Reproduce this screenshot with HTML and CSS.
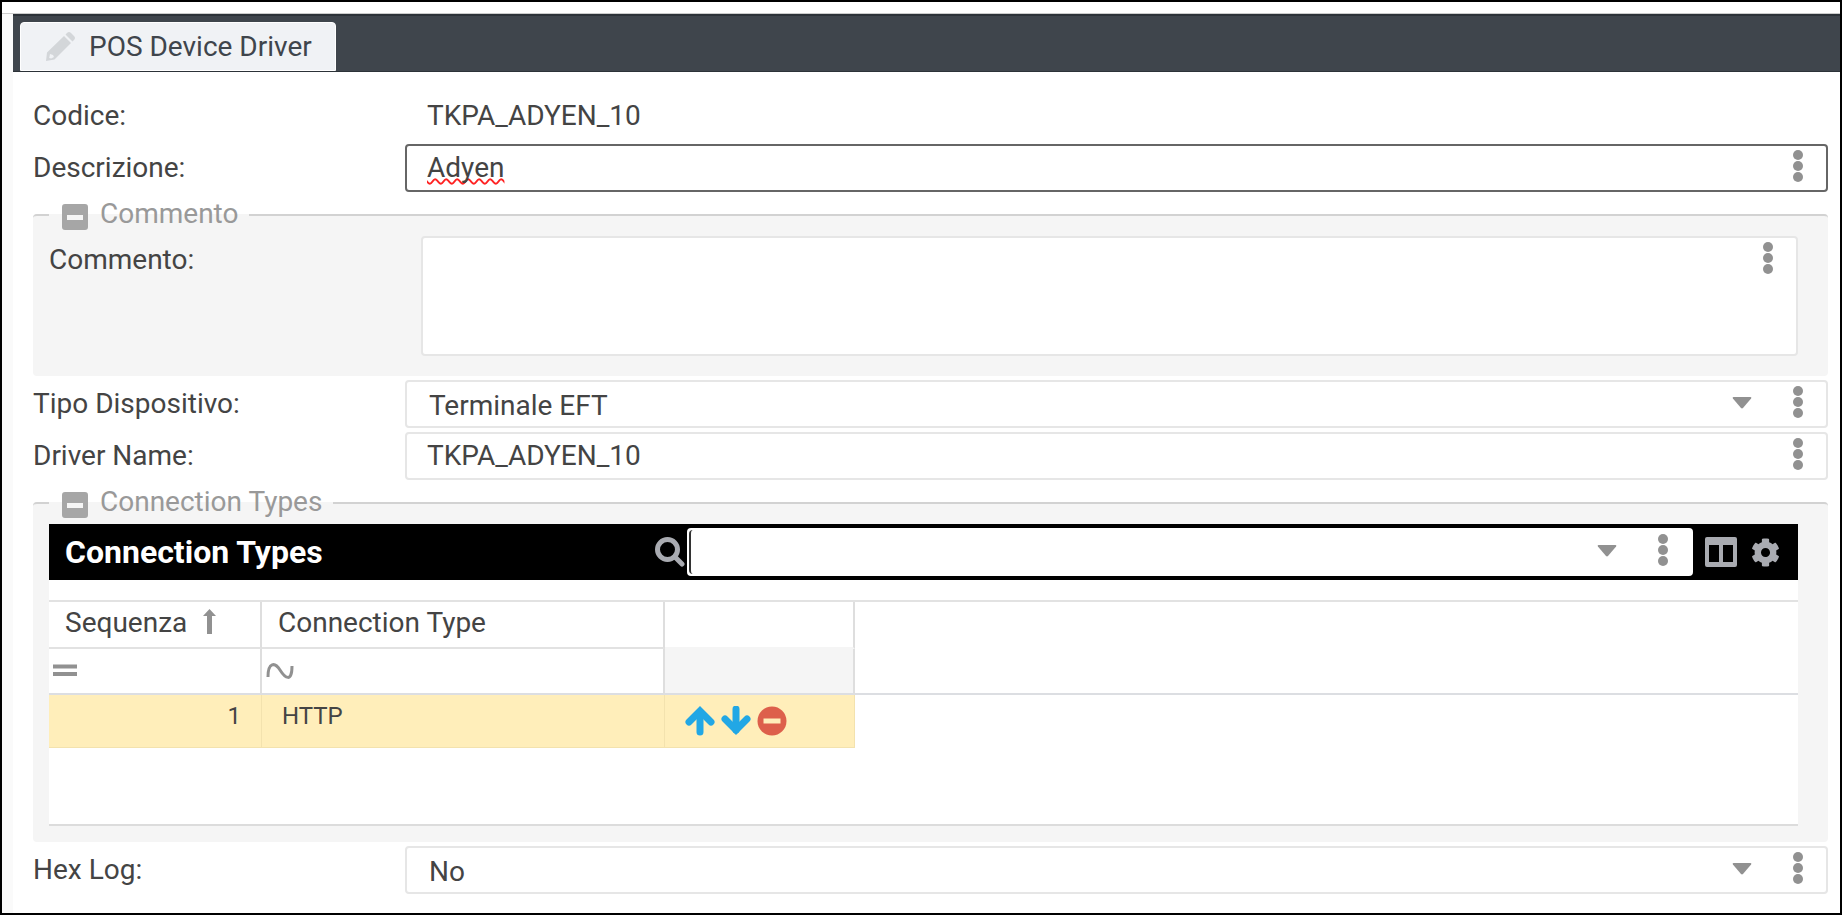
FILE: index.html
```html
<!DOCTYPE html>
<html lang="it">
<head>
    <meta charset="UTF-8">
    <meta name="viewport" content="width=device-width, initial-scale=1.0">
    <title>POS Device Driver</title>
    <link rel="stylesheet" href="styles.css">
</head>
<body>
    <!-- Shared icons -->
    <svg class="sprite" aria-hidden="true">
        <symbol id="dots" viewBox="0 0 10 34">
            <circle cx="5" cy="6" r="5"/><circle cx="5" cy="17" r="5"/><circle cx="5" cy="28" r="5"/>
        </symbol>
        <symbol id="caret" viewBox="0 0 20 12">
            <path d="M1.5 0h17q1.500 .3.6 1.500L11 11q-1 .8-2 0L.9 1.500Q0 .3 1.500 0z"/>
        </symbol>
        <symbol id="minus" viewBox="0 0 26 26">
            <path fill-rule="evenodd" d="M3 0h20a3 3 0 0 1 3 3v20a3 3 0 0 1-3 3H3a3 3 0 0 1-3-3V3a3 3 0 0 1 3-3zM5 11v5h16v-5z"/>
        </symbol>
    </svg>

    <div class="window">
        <div class="topline"></div>
        <main class="panel">
            <nav class="tabs">
                <button class="tab" type="button">
                    <svg class="icon-pencil" viewBox="0 0 29 29"><path fill-rule="evenodd" d="M18 4l7 7L8.500 27.500 0 29l1-8.500zM19.500 2.500L21 1q2-2 4 0l3 3q2 2 0 4l-1.500 1.500zM4 22l-.8 4 2 .6 2.800-1.600-1-2z"/></svg>
                    POS Device Driver
                </button>
            </nav>

            <form class="form">
                <div class="row">
                    <span class="label">Codice:</span>
                    <span class="value">TKPA_ADYEN_10</span>
                </div>
                <div class="row">
                    <label class="label" for="descrizione">Descrizione:</label>
                    <div class="field active">
                        <input class="misspelled" id="descrizione" type="text" value="Adyen">
                        <button class="more" type="button" aria-label="Menu"><svg class="dots"><use href="#dots"/></svg></button>
                    </div>
                </div>

                <fieldset class="group">
                    <legend>
                        <button class="toggle" type="button" aria-label="Comprimi"><svg class="icon-minus"><use href="#minus"/></svg></button>
                        <span>Commento</span>
                    </legend>
                    <div class="row">
                        <label class="label" for="commento">Commento:</label>
                        <div class="field area">
                            <textarea id="commento"></textarea>
                            <button class="more" type="button" aria-label="Menu"><svg class="dots"><use href="#dots"/></svg></button>
                        </div>
                    </div>
                </fieldset>

                <div class="row">
                    <label class="label" for="tipo">Tipo Dispositivo:</label>
                    <div class="field">
                        <select id="tipo"><option>Terminale EFT</option></select>
                        <svg class="caret"><use href="#caret"/></svg>
                        <button class="more" type="button" aria-label="Menu"><svg class="dots"><use href="#dots"/></svg></button>
                    </div>
                </div>
                <div class="row">
                    <label class="label" for="driver">Driver Name:</label>
                    <div class="field">
                        <input id="driver" type="text" value="TKPA_ADYEN_10">
                        <button class="more" type="button" aria-label="Menu"><svg class="dots"><use href="#dots"/></svg></button>
                    </div>
                </div>

                <fieldset class="group">
                    <legend>
                        <button class="toggle" type="button" aria-label="Comprimi"><svg class="icon-minus"><use href="#minus"/></svg></button>
                        <span>Connection Types</span>
                    </legend>
                    <div class="toolbar">
                        <h2>Connection Types</h2>
                        <svg class="icon-search" viewBox="0 0 30 30"><circle cx="12.500" cy="12.500" r="10"/><path d="M20 20l7 7"/></svg>
                        <div class="field search">
                            <input type="text" aria-label="Cerca">
                            <svg class="caret"><use href="#caret"/></svg>
                            <button class="more" type="button" aria-label="Menu"><svg class="dots"><use href="#dots"/></svg></button>
                        </div>
                        <button class="tool" type="button" aria-label="Colonne">
                            <svg class="icon-columns" viewBox="0 0 32 30"><path fill-rule="evenodd" d="M2 0h28a2 2 0 0 1 2 2v26a2 2 0 0 1-2 2H2a2 2 0 0 1-2-2V2a2 2 0 0 1 2-2zM4 8v17h10V8zM18 8v17h10V8z"/></svg>
                        </button>
                        <button class="tool" type="button" aria-label="Impostazioni">
                            <svg class="icon-gear" viewBox="0 0 512 512"><path d="M487.400 315.700l-42.600-24.600c4.300-23.200 4.300-47 0-70.200l42.600-24.600c4.900-2.800 7.100-8.600 5.500-14-11.100-35.600-30-67.800-54.700-94.600-3.800-4.100-10-5.100-14.800-2.300L380.800 110c-17.900-15.400-38.500-27.300-60.800-35.100V25.800c0-5.600-3.900-10.500-9.400-11.700-36.700-8.200-74.300-7.800-109.200 0-5.500 1.200-9.400 6.100-9.400 11.700V75c-22.200 7.900-42.800 19.800-60.800 35.100L88.700 85.500c-4.900-2.800-11-1.900-14.800 2.300-24.700 26.700-43.600 58.900-54.700 94.600-1.700 5.400.6 11.200 5.500 14L67.300 221c-4.300 23.200-4.300 47 0 70.200l-42.600 24.600c-4.900 2.800-7.100 8.600-5.500 14 11.100 35.600 30 67.800 54.700 94.600 3.800 4.100 10 5.100 14.800 2.300l42.600-24.600c17.900 15.400 38.500 27.300 60.800 35.100v49.200c0 5.600 3.900 10.500 9.400 11.700 36.700 8.200 74.300 7.800 109.200 0 5.500-1.200 9.400-6.100 9.400-11.700v-49.200c22.200-7.900 42.800-19.800 60.800-35.100l42.600 24.600c4.900 2.800 11 1.900 14.800-2.300 24.700-26.700 43.600-58.900 54.700-94.600 1.500-5.500-.7-11.300-5.600-14.100zM256 336c-44.100 0-80-35.900-80-80s35.900-80 80-80 80 35.900 80 80-35.900 80-80 80z"/></svg>
                        </button>
                    </div>
                    <div class="grid">
                        <table>
                            <colgroup>
                                <col class="col-seq"><col class="col-type"><col class="col-actions"><col>
                            </colgroup>
                            <thead>
                                <tr>
                                    <th>Sequenza <svg class="icon-sort" viewBox="0 0 13 25"><path d="M6.500 0L13 7H9v18H4V7H0z"/></svg></th>
                                    <th>Connection Type</th>
                                    <th></th>
                                    <td class="rest" rowspan="2"></td>
                                </tr>
                                <tr class="filters">
                                    <td><div class="filter"><svg class="icon-op" viewBox="0 0 28 16"><path d="M2 3.500h24M2 11h24"/></svg><input type="text" aria-label="Filtra Sequenza"></div></td>
                                    <td><div class="filter"><svg class="icon-op thin" viewBox="0 0 28 16"><path d="M2 14C2-1 9-1 14 7s12 13 12-4"/></svg><input type="text" aria-label="Filtra Connection Type"></div></td>
                                    <td class="blank"></td>
                                </tr>
                            </thead>
                            <tbody>
                                <tr class="selected">
                                    <td class="number">1</td>
                                    <td>HTTP</td>
                                    <td>
                                        <div class="actions">
                                            <button type="button" aria-label="Su"><svg class="icon-move" viewBox="0 0 30 30"><path d="M4 16L15 5l11 11"/><path d="M15 6v20"/></svg></button>
                                            <button type="button" aria-label="Giù"><svg class="icon-move" viewBox="0 0 30 30"><path d="M4 13l11 11 11-11"/><path d="M15 24V3"/></svg></button>
                                            <button type="button" aria-label="Rimuovi"><svg class="icon-remove" viewBox="0 0 30 30"><circle cx="15" cy="15" r="14.500"/><path d="M6.500 15h17"/></svg></button>
                                        </div>
                                    </td>
                                </tr>
                            </tbody>
                        </table>
                    </div>
                </fieldset>

                <div class="row">
                    <label class="label" for="hexlog">Hex Log:</label>
                    <div class="field">
                        <select id="hexlog"><option>No</option></select>
                        <svg class="caret"><use href="#caret"/></svg>
                        <button class="more" type="button" aria-label="Menu"><svg class="dots"><use href="#dots"/></svg></button>
                    </div>
                </div>
            </form>
        </main>
    </div>
</body>
</html>
```

FILE: styles.css
```css
* {
    box-sizing: border-box;
}
body {
    margin: 0;
    font-family: Roboto, "Liberation Sans", sans-serif;
    font-size: 28px;
    line-height: 48px;
    color: #444;
}
button, input, select, textarea {
    margin: 0;
    padding: 0;
    border: none;
    outline: none;
    background: none;
    font: inherit;
    color: inherit;
}
button {
    cursor: pointer;
}
svg {
    display: block;
    flex: none;
}
.sprite {
    display: none;
}
.window {
    display: flex;
    flex-direction: column;
    min-height: 100vh;
    border: 2px solid #000;
    background-color: #fafafa;
}
.topline {
    height: 12px;
    background-color: #fff;
    border-bottom: 1px solid #ccc;
}
.panel {
    flex: 1;
    margin-left: 11px;
    background-color: #fff;
}

/* Tabs */
.tabs {
    display: flex;
    height: 58px;
    padding: 6px 7px 0;
    border-top: 2px solid #2c3238;
    border-bottom: 1px solid #2c3238;
    background-color: #3f454c;
}
.tab {
    display: flex;
    align-items: center;
    gap: 14px;
    padding: 0 23px 0 25px;
    border: 1px solid #fff;
    border-radius: 4px 4px 0 0;
    background-color: #f0f2f5;
    color: #3f454c;
}
.icon-pencil {
    width: 29px;
    height: 29px;
    fill: #d3d6d9;
}

/* Form rows */
.form {
    display: flex;
    flex-direction: column;
    gap: 4px;
    padding: 20px 12px 16px 20px;
}
.row {
    display: grid;
    grid-template-columns: 372px 1fr;
    min-height: 48px;
}
.value {
    padding-left: 22px;
}
.field {
    display: flex;
    min-width: 0;
    height: 48px;
    border: 2px solid #e6e6e6;
    border-radius: 4px;
    background-color: #fff;
}
.field.active {
    border-color: #666;
}
.field.area {
    height: 120px;
    margin-bottom: 4px;
}
.field input, .field select, .field textarea {
    flex: 1;
    min-width: 0;
    padding: 0 20px;
}
.field select {
    appearance: none;
    padding-left: 22px;
}
.field textarea {
    resize: none;
}
.misspelled {
    text-decoration: underline wavy #f22 2px;
    text-decoration-skip-ink: none;
}
.caret {
    width: 20px;
    height: 12px;
    margin: 15px 18px 15px 14px;
    fill: #919191;
}
.more {
    display: flex;
    justify-content: center;
    width: 56px;
    padding-top: 3px;
}
.dots {
    width: 10px;
    height: 34px;
    fill: #919191;
}

/* Groups */
.group {
    min-width: 0;
    margin: 0;
    padding: 2px 30px 16px 16px;
    border: 0 solid #d2d2d2;
    border-top-width: 2px;
    border-radius: 4px;
    background-color: #f5f5f5;
}
.group legend {
    display: flex;
    gap: 12px;
    height: 38px;
    padding: 0 11px 0 13px;
    line-height: 36px;
    color: #999;
}
.toggle {
    align-self: flex-end;
    padding-bottom: 4px;
}
.icon-minus {
    width: 26px;
    height: 26px;
    fill: #a6a6a6;
}

/* Connection types */
.toolbar {
    display: flex;
    align-items: center;
    height: 56px;
    padding: 0 18px 0 16px;
    background-color: #000;
}
.toolbar h2 {
    flex: 1;
    margin: 0;
    font-size: 32px;
    color: #fff;
}
.icon-search {
    width: 30px;
    height: 30px;
    margin-right: 2px;
    fill: none;
    stroke: #a9abb1;
    stroke-width: 5;
    stroke-linecap: round;
}
.search {
    flex: 0 0 1006px;
    margin-right: 12px;
    border-color: #fff;
}
.search input {
    border-left: 2px solid #333;
    border-radius: 4px;
}
.tool + .tool {
    margin-left: 14px;
}
.icon-columns {
    width: 32px;
    height: 30px;
    fill: #a9abb1;
}
.icon-gear {
    width: 29px;
    height: 29px;
    fill: #a9abb1;
}
.grid {
    height: 246px;
    padding-top: 20px;
    border-bottom: 2px solid #dcdcdc;
    background-color: #fff;
}
table {
    width: 100%;
    table-layout: fixed;
    border-collapse: separate;
    border-spacing: 0;
    border-top: 2px solid #e2e2e2;
}
.col-seq {
    width: 213px;
}
.col-type {
    width: 403px;
}
.col-actions {
    width: 190px;
}
th, td {
    padding: 0 16px;
    text-align: left;
    font-weight: normal;
}
th {
    height: 47px;
    line-height: 41px;
    vertical-align: top;
    border-right: 2px solid #dedede;
    border-bottom: 2px solid #e2e2e2;
}
th:nth-child(3) {
    border-bottom-color: #f5f5f5;
}
.icon-sort {
    display: inline-block;
    width: 13px;
    height: 25px;
    margin-left: 9px;
    vertical-align: -2px;
    fill: #919191;
}
.filters td {
    height: 46px;
    padding: 0;
    line-height: 40px;
    border-right: 2px solid #dedede;
    border-bottom: 2px solid #dcdee2;
}
.filters .blank {
    background-color: #f5f5f5;
}
.rest {
    border-bottom: 2px solid #dcdee2;
}
.filter {
    display: flex;
    align-items: center;
}
.filter input {
    flex: 1;
    min-width: 0;
}
.icon-op {
    width: 28px;
    height: 16px;
    margin-left: 2px;
    fill: none;
    stroke: #919191;
    stroke-width: 4;
}
.icon-op.thin {
    margin-left: 4px;
    stroke-width: 3;
}
.selected td {
    height: 53px;
    padding: 0 20px;
    font-size: 24px;
    line-height: 42px;
    vertical-align: top;
    border-right: 1px solid #f3e2ae;
    border-bottom: 1px solid #f3e2ae;
    background-color: #ffeeba;
}
.selected .number {
    text-align: right;
}
.actions {
    display: flex;
    gap: 6px;
    padding-top: 11px;
}
.icon-move, .icon-remove {
    width: 30px;
    height: 30px;
}
.icon-move {
    fill: none;
    stroke: #22a7e5;
    stroke-width: 7;
    stroke-linecap: round;
}
.icon-remove {
    fill: #dd5f4b;
    stroke: none;
}
.icon-remove path {
    stroke: #ffeeba;
    stroke-width: 5;
}
```
